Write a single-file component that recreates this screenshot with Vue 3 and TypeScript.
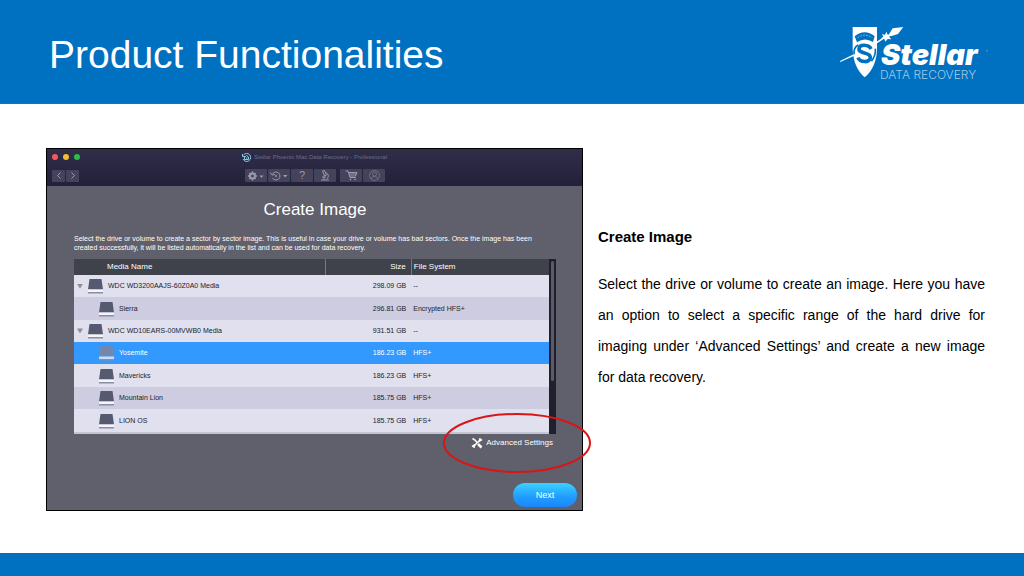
<script setup lang="ts">
interface Volume {
  name: string
  size: string
  fs: string
  child: boolean
  selected?: boolean
}

const volumes: Volume[] = [
  { name: 'WDC WD3200AAJS-60Z0A0 Media', size: '298.09 GB', fs: '--', child: false },
  { name: 'Sierra', size: '296.81 GB', fs: 'Encrypted HFS+', child: true },
  { name: 'WDC WD10EARS-00MVWB0 Media', size: '931.51 GB', fs: '--', child: false },
  { name: 'Yosemite', size: '186.23 GB', fs: 'HFS+', child: true, selected: true },
  { name: 'Mavericks', size: '186.23 GB', fs: 'HFS+', child: true },
  { name: 'Mountain Lion', size: '185.75 GB', fs: 'HFS+', child: true },
  { name: 'LION OS', size: '185.75 GB', fs: 'HFS+', child: true },
]
</script>

<template>
  <div class="slide">
    <header class="banner">
      <h1>Product Functionalities</h1>
      <svg class="logo" viewBox="0 0 540 240" role="img" aria-label="Stellar Data Recovery">
        <path d="M48 153 L92 131 L94 136 L49 156 Z" fill="#fff" />
        <path d="M86 51 H159 V120 C157 156 144 185 122 202 C101 185 88 156 86 120 Z" fill="#fff" />
        <path d="M92 79 Q122 55 152 79 L147 96 Q122 80 99 97 Z" fill="#0070c0" />
        <path d="M101 83 Q122 68 145 83" fill="none" stroke="#8fc0e4" stroke-width="3" stroke-dasharray="5 4" />
        <path d="M141 117 C135 103 106 101 105 117 C104 133 140 125 139 143 C138 159 108 158 102 143" fill="none" stroke="#0070c0" stroke-width="11" />
        <path d="M90 133 Q88 112 103 105 M154 116 Q156 137 142 154" fill="none" stroke="#0070c0" stroke-width="5" />
        <path d="M158 98 L182 82" stroke="#fff" stroke-width="5" />
        <path d="M174 72 L183 75 L187 65 L191 74 L201 73 L196 81 L202 88 L191 87 L184 95 L181 86 L171 85 L178 80 Z" fill="#fff" />
        <path d="M194 74 L206 55 L238 51 L222 72 L201 79 Z" fill="#fff" />
        <text class="brand" x="171" y="164">Stellar</text>
        <text class="tagline" x="168" y="206">DATA RECOVERY</text>
        <circle cx="489" cy="122" r="3" fill="#3b91cf" />
      </svg>
    </header>

    <main class="content">
      <section class="window" aria-label="Stellar Phoenix Mac Data Recovery">
        <div class="chrome">
          <div class="titlebar">
            <div class="lights"><i class="red"></i><i class="amber"></i><i class="green"></i></div>
            <div class="app-title">
              <svg width="9" height="9" viewBox="0 0 18 18" fill="none" stroke="#8cc9e8" stroke-width="2">
                <path d="M3 4 A8 8 0 1 1 2 12 M1 2 V7 H6" />
                <path d="M5 13 V8 L9 5 L13 8 V13 Z M8 10 H11" />
              </svg>
              <span>Stellar Phoenix Mac Data Recovery - Professional</span>
            </div>
          </div>
          <div class="toolbar">
            <div class="group nav">
              <button type="button" aria-label="Back"><svg width="8" height="9" viewBox="0 0 16 18"><path d="M11 3 L5 9 L11 15" /></svg></button>
              <button type="button" aria-label="Forward"><svg width="8" height="9" viewBox="0 0 16 18"><path d="M5 3 L11 9 L5 15" /></svg></button>
            </div>
            <div class="group">
              <button type="button" aria-label="Settings">
                <svg width="16" height="10" viewBox="0 0 32 20">
                  <circle cx="9" cy="10" r="5" stroke-width="4" />
                  <path d="M9 1 V5 M9 15 V19 M0 10 H4 M14 10 H18 M3 4 L5 6 M13 14 L15 16 M15 4 L13 6 M5 14 L3 16" stroke-width="3" />
                  <path class="solid" d="M23 9 H31 L27 14 Z" />
                </svg>
              </button>
              <button type="button" aria-label="History">
                <svg width="18" height="10" viewBox="0 0 36 20">
                  <path d="M5 6 A8 8 0 1 1 5 14 M1 3 L4 8 L10 7" />
                  <circle class="solid" cx="12" cy="10" r="2" />
                  <path class="solid" d="M26 8 H35 L30 13 Z" />
                </svg>
              </button>
              <button type="button" class="help" aria-label="Help">?</button>
              <button type="button" aria-label="Deep scan">
                <svg width="12" height="11" viewBox="0 0 24 22">
                  <path d="M7 2 L11 1 L15 10 L11 12 Z M13 5 C20 7 20 15 15 19 M6 14 H14 M4 20 H20 M10 14 V19" />
                </svg>
              </button>
            </div>
            <div class="group">
              <button type="button" aria-label="Buy">
                <svg width="13" height="11" viewBox="0 0 26 22">
                  <path d="M1 2 H6 L10 15 H22 M7 5 H24 L21 12 H9 M8 8 H23" />
                  <circle cx="11" cy="19" r="1" /><circle cx="20" cy="19" r="1" />
                </svg>
              </button>
              <button type="button" class="faded" aria-label="Account">
                <svg width="13" height="11" viewBox="0 0 26 22">
                  <circle cx="13" cy="11" r="10" />
                  <circle cx="13" cy="8" r="4" />
                  <path d="M6 18 Q7 13 13 13 Q19 13 20 18" />
                </svg>
              </button>
            </div>
          </div>
        </div>

        <div class="panel">
          <h2>Create Image</h2>
          <p class="hint">Select the drive or volume to create a sector by sector image. This is useful in case your drive or volume has bad sectors. Once the image has been created successfully, it will be listed automatically in the list and can be used for data recovery.</p>

          <div class="list">
            <table>
              <colgroup><col class="c-name" /><col class="c-size" /><col /></colgroup>
              <thead>
                <tr><th scope="col" class="name-head">Media Name</th><th scope="col" class="size">Size</th><th scope="col">File System</th></tr>
              </thead>
              <tbody>
                <tr v-for="v in volumes" :key="v.name" :class="{ selected: v.selected }">
                  <td>
                    <div class="media" :class="{ child: v.child }">
                      <button v-if="!v.child" type="button" class="toggle" :aria-label="'Collapse ' + v.name"></button>
                      <svg class="drive" width="15" height="16" viewBox="0 0 30 32">
                        <path class="lid" d="M3 2 H27 L30 23 H0 Z" />
                        <path class="front" d="M0 23 H30 V28 H0 Z" />
                        <path class="base" d="M0 28 H30 V31 H0 Z" />
                      </svg>
                      <span>{{ v.name }}</span>
                    </div>
                  </td>
                  <td class="size">{{ v.size }}</td>
                  <td>{{ v.fs }}</td>
                </tr>
              </tbody>
            </table>
            <div class="track"><div class="thumb"></div></div>
          </div>

          <div class="options">
            <button type="button" class="advanced">
              <svg width="12" height="12" viewBox="0 0 24 24" fill="none" stroke="#fff">
                <path d="M3 3 L8 6 L13 12" stroke-width="3" />
                <path d="M7 17 L17 7" stroke-width="3" />
                <path d="M22 5 L17 8 L18 2" stroke-width="3" />
                <path d="M2 19 L7 16 L6 22" stroke-width="3" />
                <path d="M14 14 L21 21" stroke-width="5" />
              </svg>
              Advanced Settings
            </button>
          </div>
          <div class="actions"><button type="button" class="next">Next</button></div>
        </div>

        <svg class="highlight" width="150" height="62" viewBox="0 0 150 62" aria-hidden="true">
          <ellipse cx="75" cy="31" rx="73" ry="29" fill="none" stroke="#d81616" stroke-width="2" />
        </svg>
      </section>

      <article class="notes">
        <h3>Create Image</h3>
        <p>Select the drive or volume to create an image. Here you have an option to select a specific range of the hard drive for imaging under ‘Advanced Settings’ and create a new image for data recovery.</p>
      </article>
    </main>

    <footer class="strip"></footer>
  </div>
</template>

<style>
body { margin: 0; background: #fff; }
</style>

<style scoped>
* { box-sizing: border-box; }
.slide {
  min-height: 100vh;
  display: flex;
  flex-direction: column;
  background: #fff;
  color: #000;
  font-family: "Liberation Sans", Arial, sans-serif;
}
h1, h2, h3, p { margin: 0; }
button { padding: 0; border: 0; background: none; color: inherit; font: inherit; }

.banner {
  height: 104px;
  flex: none;
  display: flex;
  align-items: flex-start;
  justify-content: space-between;
  padding: 10px 20px 0 49px;
  background: #0070c0;
  border-bottom: 1px solid #2f6c9e;
}
h1 { margin-top: 17px; color: #fff; font-size: 39px; line-height: 56px; font-weight: 400; white-space: nowrap; }
.logo { width: 180px; height: 80px; flex: none; }
.brand { fill: #fff; font: italic 900 87px Inter, "Liberation Sans", sans-serif; }
.tagline { fill: #9dcbea; font: 300 36px Inter, "Liberation Sans", sans-serif; }

.content {
  flex: 1;
  display: grid;
  grid-template-columns: minmax(0, 537fr) minmax(0, 387fr);
  column-gap: 15px;
  align-items: start;
  padding: 44px 39px 42px 46px;
}

.window {
  position: relative;
  border: 1px solid #000;
  background: #5f606c;
  color: #fff;
  font-size: 7px;
}
.chrome { height: 37px; background: linear-gradient(#302d49, #222139); }
.titlebar { display: grid; grid-template-columns: 1fr auto 1fr; align-items: center; height: 16px; padding: 0 5px; }
.lights { display: flex; gap: 5px; }
.lights i { width: 6px; height: 6px; border-radius: 50%; }
.red { background: #f25a5c; }
.amber { background: #f5bd30; }
.green { background: #2dba48; }
.app-title { display: flex; align-items: center; gap: 3px; color: #6f6c86; line-height: 10px; font-size: 6px; }
.toolbar { display: flex; align-items: center; gap: 4px; padding: 4px 0 0 5px; }
.group { display: flex; gap: 1px; }
.group.nav { width: 189px; }
.group button {
  display: flex;
  align-items: center;
  justify-content: center;
  width: 22px;
  height: 13px;
  background: #45435c;
  border-radius: 1px;
  color: #9c9aac;
}
.group.nav button { width: 13px; height: 12px; }
.group svg { fill: none; stroke: #9c9aac; stroke-width: 2; }
.group .solid { fill: #9c9aac; stroke: none; }
.group button.help { font-size: 11px; line-height: 13px; }
.group .faded svg { stroke: #716f82; }

.panel { padding: 14px 26px 3px 27px; }
h2 { font-size: 17px; line-height: 20px; font-weight: 400; text-align: center; }
.hint { margin: 14px 0 7px; line-height: 9px; }

.list { display: flex; }
table { flex: 1; height: 175px; border-collapse: collapse; table-layout: fixed; border-bottom: 2px solid #c4c4d4; }
.c-name { width: 53%; }
.c-size { width: 18%; }
th, td { padding: 0 2px; text-align: left; font-weight: 400; white-space: nowrap; line-height: 10px; }
th { font-size: 8px; }
thead tr { height: 16px; background: #3f414b; }
th + th { border-left: 1px solid #767884; }
.name-head { padding-left: 33px; }
.size { text-align: right; padding-right: 5px; }
tbody tr { background: #e0e0ef; color: #22222c; }
tbody tr:nth-child(even) { background: #cdcce0; }
tbody tr.selected { background: #3499fe; color: #fff; }
.media { display: flex; align-items: center; gap: 5px; padding-left: 1px; }
.media.child { padding-left: 23px; }
.toggle { width: 6px; height: 5px; background: #8d8d9a; clip-path: polygon(0 0, 100% 0, 50% 100%); }
.drive { flex: none; }
.lid { fill: #565a70; }
.front { fill: #f4f4fb; }
.base { fill: #8b8da3; }
.selected .lid { fill: #7187ad; }
.selected .front { fill: #c9dcf6; }
.track { width: 7px; background: #20202c; padding: 2px; }
.thumb { height: 120px; background: #5a5b69; border-radius: 2px; }

.options { display: flex; justify-content: flex-end; padding: 3px 3px 0 0; }
.advanced { display: flex; align-items: center; gap: 3px; font-size: 8px; line-height: 12px; }
.actions { display: flex; justify-content: flex-end; margin: 34px -21px 0 0; }
.next {
  width: 64px;
  height: 24px;
  border-radius: 12px;
  background: linear-gradient(#3dd0ff, #1f9bff 60%, #1c86fb);
  font-size: 9px;
  line-height: 24px;
}
.highlight { position: absolute; right: -10px; bottom: 36px; }

.notes { padding-top: 77px; }
h3 { font-size: 15px; line-height: 24px; font-weight: 700; }
.notes p { margin-top: 20px; font-size: 14px; line-height: 31px; text-align: justify; }

.strip { height: 23px; flex: none; background: #0070c0; }
</style>
